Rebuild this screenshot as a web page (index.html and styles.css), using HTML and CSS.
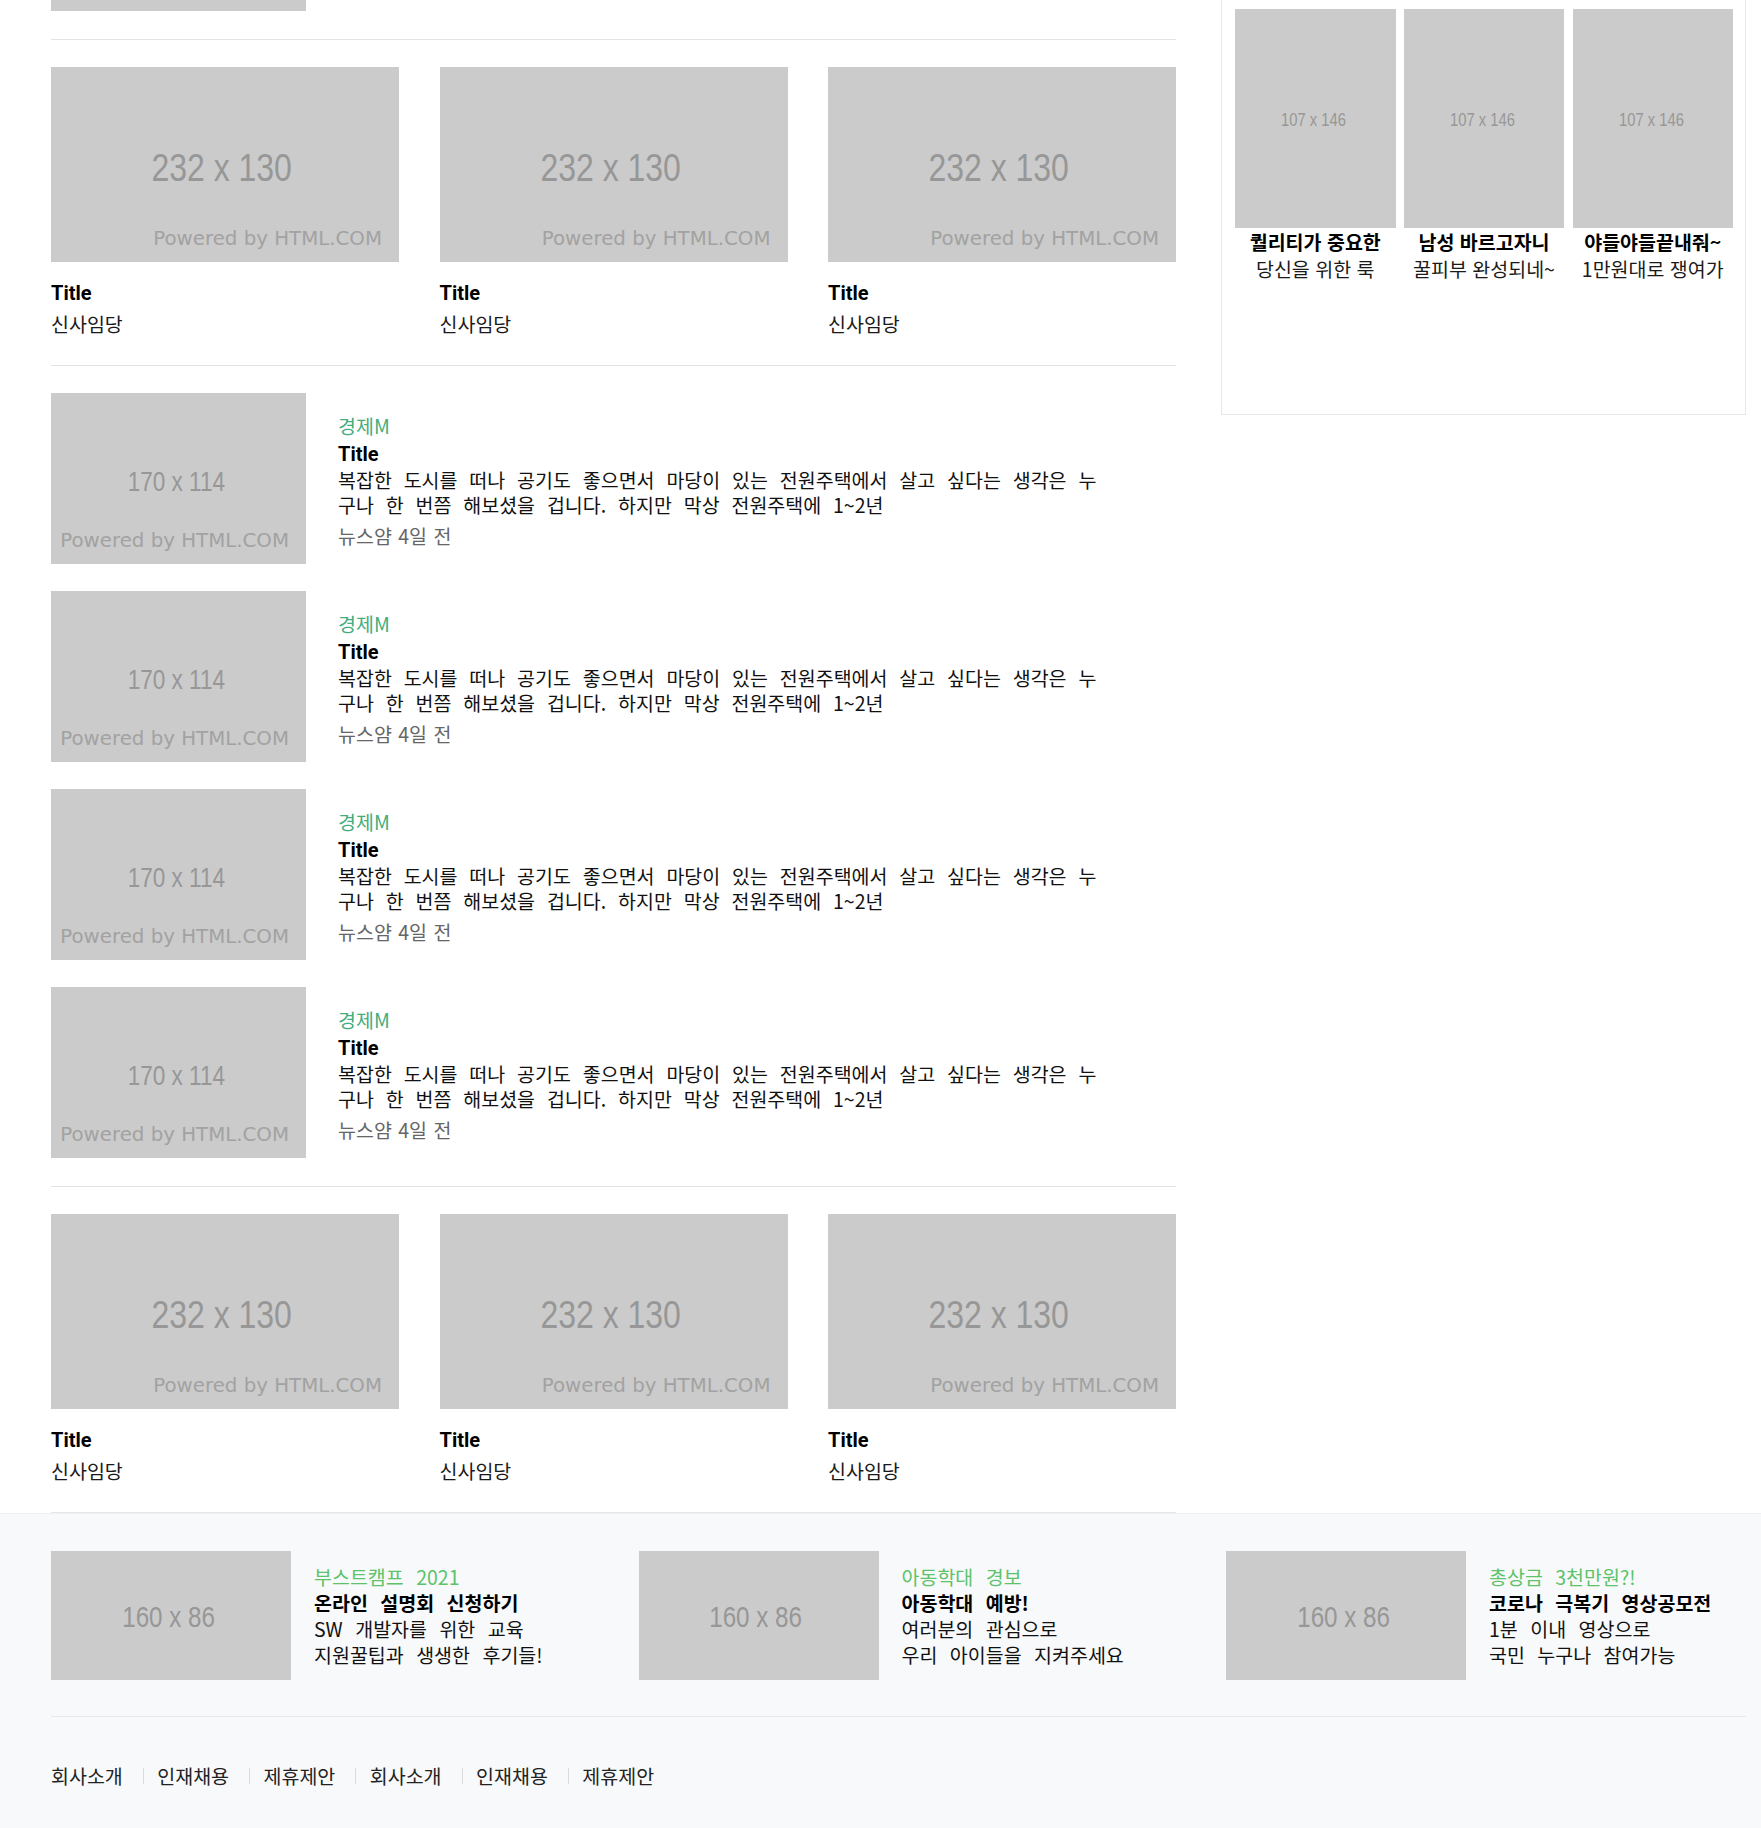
FILE: index.html
```html
<!DOCTYPE html>
<html lang="ko">
<head>
<meta charset="utf-8">
<title>News</title>
<link rel="stylesheet" href="styles.css">
</head>
<body>
<div class="page">
  <main class="main">
    <div class="frag"></div>

    <section class="cards">
      <article class="card">
        <div class="ph ph-card"><span class="dim dim-card">232 x 130</span><span class="pw">Powered by HTML.COM</span></div>
        <h3 class="card-title">Title</h3>
        <p class="card-sub">신사임당</p>
      </article>
      <article class="card">
        <div class="ph ph-card"><span class="dim dim-card">232 x 130</span><span class="pw">Powered by HTML.COM</span></div>
        <h3 class="card-title">Title</h3>
        <p class="card-sub">신사임당</p>
      </article>
      <article class="card">
        <div class="ph ph-card"><span class="dim dim-card">232 x 130</span><span class="pw">Powered by HTML.COM</span></div>
        <h3 class="card-title">Title</h3>
        <p class="card-sub">신사임당</p>
      </article>
    </section>

    <section class="list">
      <article class="item">
        <div class="ph ph-list"><span class="dim dim-list">170 x 114</span><span class="pw">Powered by HTML.COM</span></div>
        <div class="item-text">
          <p class="label">경제M</p>
          <h3 class="item-title">Title</h3>
          <p class="item-desc">복잡한 도시를 떠나 공기도 좋으면서 마당이 있는 전원주택에서 살고 싶다는 생각은 누구나 한 번쯤 해보셨을 겁니다. 하지만 막상 전원주택에 1~2년</p>
          <p class="meta">뉴스얌 4일 전</p>
        </div>
      </article>
      <article class="item">
        <div class="ph ph-list"><span class="dim dim-list">170 x 114</span><span class="pw">Powered by HTML.COM</span></div>
        <div class="item-text">
          <p class="label">경제M</p>
          <h3 class="item-title">Title</h3>
          <p class="item-desc">복잡한 도시를 떠나 공기도 좋으면서 마당이 있는 전원주택에서 살고 싶다는 생각은 누구나 한 번쯤 해보셨을 겁니다. 하지만 막상 전원주택에 1~2년</p>
          <p class="meta">뉴스얌 4일 전</p>
        </div>
      </article>
      <article class="item">
        <div class="ph ph-list"><span class="dim dim-list">170 x 114</span><span class="pw">Powered by HTML.COM</span></div>
        <div class="item-text">
          <p class="label">경제M</p>
          <h3 class="item-title">Title</h3>
          <p class="item-desc">복잡한 도시를 떠나 공기도 좋으면서 마당이 있는 전원주택에서 살고 싶다는 생각은 누구나 한 번쯤 해보셨을 겁니다. 하지만 막상 전원주택에 1~2년</p>
          <p class="meta">뉴스얌 4일 전</p>
        </div>
      </article>
      <article class="item">
        <div class="ph ph-list"><span class="dim dim-list">170 x 114</span><span class="pw">Powered by HTML.COM</span></div>
        <div class="item-text">
          <p class="label">경제M</p>
          <h3 class="item-title">Title</h3>
          <p class="item-desc">복잡한 도시를 떠나 공기도 좋으면서 마당이 있는 전원주택에서 살고 싶다는 생각은 누구나 한 번쯤 해보셨을 겁니다. 하지만 막상 전원주택에 1~2년</p>
          <p class="meta">뉴스얌 4일 전</p>
        </div>
      </article>
    </section>

    <section class="cards cards-last">
      <article class="card">
        <div class="ph ph-card"><span class="dim dim-card">232 x 130</span><span class="pw">Powered by HTML.COM</span></div>
        <h3 class="card-title">Title</h3>
        <p class="card-sub">신사임당</p>
      </article>
      <article class="card">
        <div class="ph ph-card"><span class="dim dim-card">232 x 130</span><span class="pw">Powered by HTML.COM</span></div>
        <h3 class="card-title">Title</h3>
        <p class="card-sub">신사임당</p>
      </article>
      <article class="card">
        <div class="ph ph-card"><span class="dim dim-card">232 x 130</span><span class="pw">Powered by HTML.COM</span></div>
        <h3 class="card-title">Title</h3>
        <p class="card-sub">신사임당</p>
      </article>
    </section>
  </main>

  <aside class="side">
    <div class="side-grid">
      <div class="side-item">
        <div class="ph ph-side"><span class="dim dim-side">107 x 146</span></div>
        <p class="side-name">퀄리티가 중요한</p>
        <p class="side-desc">당신을 위한 룩</p>
      </div>
      <div class="side-item">
        <div class="ph ph-side"><span class="dim dim-side">107 x 146</span></div>
        <p class="side-name">남성 바르고자니</p>
        <p class="side-desc">꿀피부 완성되네~</p>
      </div>
      <div class="side-item">
        <div class="ph ph-side"><span class="dim dim-side">107 x 146</span></div>
        <p class="side-name">야들야들끝내줘~</p>
        <p class="side-desc">1만원대로 쟁여가</p>
      </div>
    </div>
  </aside>
</div>

<footer class="footer">
  <div class="footer-inner">
    <div class="ads">
      <div class="ad">
        <div class="ph ph-ad"><span class="dim dim-ad">160 x 86</span></div>
        <div class="ad-text">
          <p class="ad-label">부스트캠프 2021</p>
          <p class="ad-title">온라인 설명회 신청하기</p>
          <p class="ad-desc">SW 개발자를 위한 교육<br>지원꿀팁과 생생한 후기들!</p>
        </div>
      </div>
      <div class="ad">
        <div class="ph ph-ad"><span class="dim dim-ad">160 x 86</span></div>
        <div class="ad-text">
          <p class="ad-label">아동학대 경보</p>
          <p class="ad-title">아동학대 예방!</p>
          <p class="ad-desc">여러분의 관심으로<br>우리 아이들을 지켜주세요</p>
        </div>
      </div>
      <div class="ad">
        <div class="ph ph-ad"><span class="dim dim-ad">160 x 86</span></div>
        <div class="ad-text">
          <p class="ad-label">총상금 3천만원?!</p>
          <p class="ad-title">코로나 극복기 영상공모전</p>
          <p class="ad-desc">1분 이내 영상으로<br>국민 누구나 참여가능</p>
        </div>
      </div>
    </div>
    <ul class="links">
      <li>회사소개</li>
      <li>인재채용</li>
      <li>제휴제안</li>
      <li>회사소개</li>
      <li>인재채용</li>
      <li>제휴제안</li>
    </ul>
  </div>
</footer>
</body>
</html>
```

FILE: styles.css
```css
* { box-sizing: border-box; }
html, body { margin: 0; padding: 0; }
body {
  background: #fff;
  color: #222;
  font-family: "Noto Sans CJK KR", "Noto Sans", sans-serif;
  font-size: 19.5px;
}
p, h3, ul { margin: 0; padding: 0; }
ul { list-style: none; }

.page {
  display: flex;
  align-items: flex-start;
  gap: 45px;
  padding: 0 15px 0 51px;
}
.main { width: 1125px; flex-shrink: 0; }

/* placeholders */
.ph {
  position: relative;
  background: #cbcbcb;
  display: flex;
  align-items: center;
  justify-content: center;
  color: #979797;
  font-family: "Liberation Sans", Arial, sans-serif;
  overflow: hidden;
  flex-shrink: 0;
}
.dim {
  display: inline-block;
  margin-top: 6px;
  white-space: nowrap;
  transform: scaleX(0.82);
}
.pw {
  position: absolute;
  right: 17px;
  bottom: 13px;
  font-family: "DejaVu Sans", sans-serif;
  font-stretch: normal;
  font-size: 19.8px;
  line-height: 1;
  color: #a2a2a2;
  white-space: nowrap;
}
.ph-card { width: 100%; height: 195px; }
.dim-card { font-size: 39px; margin-right: 6px; }
.ph-list { width: 255px; height: 171px; }
.dim-list { font-size: 27.5px; margin-right: 4px; }
.ph-side { width: 100%; height: 219px; }
.dim-side { font-size: 18px; margin-top: 3px; margin-right: 3px; }
.ph-ad { width: 240px; height: 129px; }
.dim-ad { font-size: 29.5px; margin-top: 2px; margin-right: 5px; }

/* top fragment */
.frag {
  width: 255px;
  height: 11px;
  background: #cbcbcb;
  margin-bottom: 28px;
}

/* cards */
.cards {
  display: grid;
  grid-template-columns: repeat(3, 1fr);
  column-gap: 40.5px;
  padding: 27px 0 29px;
  border-top: 1px solid #e3e3e3;
}
.cards-last { border-bottom: 1px solid #e3e6ea; }
.card-title {
  margin-top: 19px;
  font-family: Roboto, sans-serif;
  font-weight: 700;
  font-size: 20px;
  line-height: 25px;
  color: #000;
}
.card-sub {
  margin-top: 5px;
  line-height: 25px;
  color: #1a1a1a;
}

/* list */
.list {
  padding: 27px 0 28px;
  border-top: 1px solid #e3e3e3;
}
.item { display: flex; gap: 32px; }
.item + .item { margin-top: 27px; }
.item-text { width: 765px; padding-top: 20px; }
.label {
  line-height: 25px;
  color: #43ad7c;
}
.item-title {
  margin-top: 4px;
  font-family: Roboto, sans-serif;
  font-weight: 700;
  font-size: 20px;
  line-height: 25px;
  color: #000;
}
.item-desc {
  line-height: 25px;
  word-spacing: 6.4px;
  color: #111;
}
.meta {
  margin-top: 6px;
  line-height: 25px;
  word-spacing: 1px;
  color: #666;
}

/* sidebar */
.side {
  width: 525px;
  height: 415px;
  flex-shrink: 0;
  border: 1px solid #e8e8e8;
  border-top: 0;
  padding: 9px 12px 0 13px;
}
.side-grid {
  display: grid;
  grid-template-columns: repeat(3, 1fr);
  column-gap: 8.25px;
}
.side-name, .side-desc {
  text-align: center;
  line-height: 27px;
  white-space: nowrap;
}
.side-name { font-weight: 700; color: #000; }
.side-desc { color: #1a1a1a; }

/* footer */
.footer {
  background: #f8f9fa;
  border-top: 1px solid #eef0f2;
}
.footer-inner { padding: 37px 15px 40px 51px; }
.ads {
  display: grid;
  grid-template-columns: repeat(3, 1fr);
  column-gap: 67.5px;
  padding-bottom: 36px;
  border-bottom: 1px solid #e6e8eb;
}
.ad { display: flex; align-items: center; gap: 23px; }
.ad-text { line-height: 26px; word-spacing: 7px; }
.ad-label { color: #5cc36b; }
.ad-title { font-weight: 700; color: #000; }
.ad-desc { color: #111; }

.links {
  display: flex;
  padding-top: 45px;
  line-height: 27px;
  color: #222;
}
.links li { display: flex; align-items: center; }
.links li + li::before {
  content: "";
  width: 1px;
  height: 16px;
  background: #dcdcdc;
  margin: 0 13.5px 0 20px;
}
```
